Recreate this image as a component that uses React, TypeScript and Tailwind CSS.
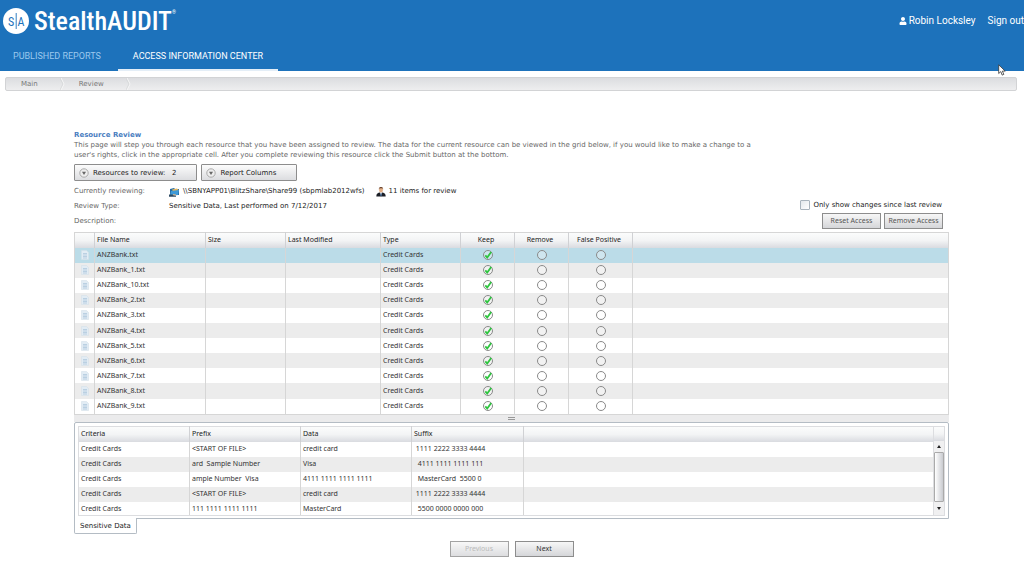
import { useState } from "react";
import { FaUser } from "react-icons/fa";

type Decision = "keep" | "remove" | "falsePositive";

const decisions: { key: Decision; label: string }[] = [
    { key: "keep", label: "Keep" },
    { key: "remove", label: "Remove" },
    { key: "falsePositive", label: "False Positive" },
];

const files = [
    "ANZBank.txt",
    "ANZBank_1.txt",
    "ANZBank_10.txt",
    "ANZBank_2.txt",
    "ANZBank_3.txt",
    "ANZBank_4.txt",
    "ANZBank_5.txt",
    "ANZBank_6.txt",
    "ANZBank_7.txt",
    "ANZBank_8.txt",
    "ANZBank_9.txt",
];

const matches = [
    ["Credit Cards", "<START OF FILE>", "credit card", " 1111 2222 3333 4444"],
    ["Credit Cards", "ard  Sample Number", "Visa", "  4111 1111 1111 111"],
    ["Credit Cards", "ample Number  Visa", "4111 1111 1111 1111", "  MasterCard  5500 0"],
    ["Credit Cards", "<START OF FILE>", "credit card", " 1111 2222 3333 4444"],
    ["Credit Cards", "111 1111 1111 1111", "MasterCard", "  5500 0000 0000 000"],
];

const headerRow = "h-[15px] bg-linear-to-b from-[#fbfcfc] via-[#f3f4f5] to-[#d9dbe0] text-[#222]";
const headerCell = "border-r border-[#d0d1d4] px-[2px] text-left font-normal";
const cell = "border-r border-[#d6d6d6] px-[2px] whitespace-pre";

function Logo() {
    return (
        <a href="#home" className="flex items-center gap-[5px]">
            <svg viewBox="0 0 26 26" className="size-[26px]" aria-hidden="true">
                <circle cx="13" cy="13" r="13" fill="#fff" />
                <path d="M13.200 5v16" stroke="#1d72bb" strokeWidth=".9" />
                <g fill="#1d72bb" fontFamily="Roboto Condensed, Roboto, sans-serif" fontSize="12">
                    <text x="5" y="17.500">S</text>
                    <text x="14.500" y="17.500">A</text>
                </g>
            </svg>
            <span className="flex items-start font-['Roboto_Condensed','Roboto',sans-serif] text-[26px] leading-[28px] font-medium text-white">
                StealthAUDIT
                <sup className="top-0 pt-[3px] text-[5px] leading-[5px]">®</sup>
            </span>
        </a>
    );
}

function DropButton({ children }: { children: React.ReactNode }) {
    return (
        <button
            type="button"
            className="flex h-[17px] items-center gap-1 rounded-[1px] border border-[#8d8d8d] bg-linear-to-b from-[#fcfcfc] to-[#dcdde0] pr-5 pl-1 text-[#222] whitespace-pre"
        >
            <svg viewBox="0 0 10 10" className="size-[10px]" aria-hidden="true">
                <circle cx="5" cy="5" r="4.2" fill="#eee" stroke="#aaa" strokeWidth="1" />
                <path d="M3 3.800h4L5 7z" fill="#666" />
            </svg>
            {children}
        </button>
    );
}

function FileIcon() {
    return (
        <svg viewBox="0 0 8 10" className="mx-auto h-[10px] w-2" aria-hidden="true">
            <path d="M.5.5h5l2 2v7h-7z" fill="#e2ecf4" stroke="#d5e0e9" strokeWidth=".6" />
            <path d="M2 3.500h4M2 5h4M2 6.500h4M2 8h4" stroke="#a9c4da" strokeWidth=".7" />
        </svg>
    );
}

function ShareIcon() {
    return (
        <svg viewBox="0 0 11 10" className="h-[10px] w-[11px]" aria-hidden="true">
            <path d="M1 2l4-1 1 1h4v6H1z" fill="#246ca3" />
            <path d="M3 2.500l5-1 2 2-6 1z" fill="#e3b55f" />
            <path d="M2 4l8-1-1 5-8 1z" fill="#3f9ad8" />
            <path d="M0 7.500h3l2 .8 2 .2v1.300H0z" fill="#2d4a63" />
            <path d="M4 7l3 .5v1l-3-.3z" fill="#d9b48a" />
        </svg>
    );
}

function ReviewerIcon() {
    return (
        <svg viewBox="0 0 10 11" className="h-[11px] w-[10px]" aria-hidden="true">
            <path d="M.3 10.500c0-2.600 1.200-3.700 3-4h3.400c1.800.3 3 1.400 3 4z" fill="#1c1f26" />
            <path d="M3.800 6.300h2.400L5 9.500z" fill="#fff" />
            <path d="M4.700 7h.7l.3 2.500-.7.700-.6-.7z" fill="#3f6ea5" />
            <ellipse cx="5" cy="3.700" rx="2" ry="2.700" fill="#e2ae85" />
            <path d="M2.800 3.500C2.600.2 7.400.2 7.200 3.500L6.500 2.200h-3z" fill="#5a3420" />
        </svg>
    );
}

function Separator() {
    return (
        <svg viewBox="0 0 5 12" className="h-3 w-[5px]" aria-hidden="true">
            <path d="M1 0l3 6-3 6" fill="none" stroke="#f8f8f8" strokeWidth="1" />
            <path d="M0 0l3 6-3 6" fill="none" stroke="#cfd0d2" strokeWidth=".6" />
        </svg>
    );
}

function DecisionRadio({ name, label, checked, onChange }: {
    name: string;
    label: string;
    checked: boolean;
    onChange: () => void;
}) {
    return (
        <span className="mx-auto grid size-[11px] place-items-center">
            <input
                type="radio"
                name={name}
                aria-label={label}
                checked={checked}
                onChange={onChange}
                className="col-start-1 row-start-1 m-0 size-[10px] appearance-none rounded-full border border-[#8a8a8a] bg-white/30"
            />
            {checked && (
                <svg viewBox="0 0 10 10" className="pointer-events-none col-start-1 row-start-1 size-[10px]" aria-hidden="true">
                    <path d="M2.300 5.300l1.900 2.200L8.200 2" fill="none" stroke="#2fc43f" strokeWidth="1.800" />
                </svg>
            )}
        </span>
    );
}

function FilesTable() {
    const [choices, setChoices] = useState<Record<string, Decision>>({});
    const [selected, setSelected] = useState(files[0]);

    return (
        <table className="h-[183px] w-full table-fixed border-collapse border border-[#d6d6d6] font-['Noto_Sans',sans-serif] text-[7px] leading-[10px] text-[#333]">
            <colgroup>
                <col className="w-[20px]" />
                <col className="w-[111px]" />
                <col className="w-[80px]" />
                <col className="w-[95px]" />
                <col className="w-[80px]" />
                <col className="w-[54px]" />
                <col className="w-[54px]" />
                <col className="w-[64px]" />
                <col />
            </colgroup>
            <thead>
                <tr className={headerRow}>
                    <td className={headerCell}></td>
                    <th className={headerCell}>File Name</th>
                    <th className={headerCell}>Size</th>
                    <th className={headerCell}>Last Modified</th>
                    <th className={headerCell}>Type</th>
                    {decisions.map((d) => (
                        <th key={d.key} className="border-r border-[#d0d1d4] pr-[3px] text-center font-normal">{d.label}</th>
                    ))}
                    <td></td>
                </tr>
            </thead>
            <tbody>
                {files.map((file) => (
                    <tr
                        key={file}
                        onClick={() => setSelected(file)}
                        className={file === selected ? "bg-[#bbdce8]" : "odd:bg-white even:bg-[#ececec]"}
                    >
                        <td className="border-r border-[#d6d6d6]"><FileIcon /></td>
                        <td className={cell}>{file}</td>
                        <td className={cell}></td>
                        <td className={cell}></td>
                        <td className={cell}>Credit Cards</td>
                        {decisions.map((d) => (
                            <td key={d.key} className="border-r border-[#d6d6d6]">
                                <DecisionRadio
                                    name={file}
                                    label={`${d.label} ${file}`}
                                    checked={(choices[file] ?? "keep") === d.key}
                                    onChange={() => setChoices({ ...choices, [file]: d.key })}
                                />
                            </td>
                        ))}
                        <td></td>
                    </tr>
                ))}
            </tbody>
        </table>
    );
}

function MatchesPanel() {
    return (
        <div className="flex rounded-t-[2px] border border-[#b4bcc4] bg-white px-[3px] pt-[3px] pb-[2px]">
            <div className="h-[90px] min-w-0 flex-1 overflow-hidden border-b border-[#dcdde0]">
                <table className="h-[92px] w-full table-fixed border-collapse border border-[#dcdde0] font-['Noto_Sans',sans-serif] text-[7px] leading-[10px] text-[#333]">
                    <colgroup>
                        <col className="w-[111px]" />
                        <col className="w-[111px]" />
                        <col className="w-[111px]" />
                        <col className="w-[112px]" />
                        <col />
                    </colgroup>
                    <thead>
                        <tr className={headerRow}>
                            <th className={headerCell}>Criteria</th>
                            <th className={headerCell}>Prefix</th>
                            <th className={headerCell}>Data</th>
                            <th className={headerCell}>Suffix</th>
                            <td></td>
                        </tr>
                    </thead>
                    <tbody>
                        {matches.map((row, i) => (
                            <tr key={i} className="odd:bg-white even:bg-[#ececec]">
                                {row.map((value, j) => (
                                    <td key={j} className={cell}>{value}</td>
                                ))}
                                <td></td>
                            </tr>
                        ))}
                    </tbody>
                </table>
            </div>
            <div className="flex w-[11px] flex-col border border-l-0 border-[#dcdde0] bg-[#f0f0f1]">
                <div className="h-[14px] bg-linear-to-b from-[#fbfcfc] via-[#f3f4f5] to-[#d9dbe0]"></div>
                <button type="button" aria-label="Scroll up" className="flex h-[11px] items-center justify-center">
                    <svg viewBox="0 0 4 3" className="h-[3px] w-1"><path d="M0 3l2-3 2 3z" fill="#222" /></svg>
                </button>
                <div className="flex-1 rounded-[1px] border border-[#aaa] bg-linear-to-r from-white to-[#c9cbd0]"></div>
                <button type="button" aria-label="Scroll down" className="flex h-[13px] items-center justify-center">
                    <svg viewBox="0 0 4 3" className="h-[3px] w-1"><path d="M0 0l2 3 2-3z" fill="#222" /></svg>
                </button>
            </div>
        </div>
    );
}

const smallButton =
    "h-4 w-[59px] border border-[#8d8d8d] bg-linear-to-b from-[#f7f7f7] to-[#d5d6d9] text-center font-['Noto_Sans',sans-serif] text-[7px] leading-[10px]";

export default function App() {
    return (
        <div className="bg-white font-['DejaVu_Sans',sans-serif] text-[7px] leading-[10px] text-[#666]">
            <header className="relative bg-[#1d72bb] font-['Roboto',sans-serif] text-[10px] leading-[14px] text-white">
                <div className="flex h-[42px] items-center justify-between pl-[3px]">
                    <Logo />
                    <div className="flex gap-3">
                        <a href="#profile" className="flex items-center gap-[2px]">
                            <FaUser className="size-2" />
                            Robin Locksley
                        </a>
                        <a href="#signout">Sign out</a>
                    </div>
                </div>
                <nav className="flex h-[29px] items-stretch text-[9px]">
                    <a href="#reports" className="flex items-center border-b-2 border-transparent pr-[17px] pl-[13px] text-[#9cc9ee]">
                        PUBLISHED REPORTS
                    </a>
                    <a href="#access" className="flex items-center border-b-2 border-[#e4eef7] px-[15px]">
                        ACCESS INFORMATION CENTER
                    </a>
                </nav>
                {/* mouse pointer */}
                <svg viewBox="0 0 8 12" className="absolute top-16 right-[18px] h-3 w-2" aria-hidden="true">
                    <path d="M.7.8v8.700l2.100-1.900 1.400 3.500 1.600-.7-1.400-3.300h2.800z" fill="#fff" stroke="#333" strokeWidth=".8" />
                </svg>
            </header>

            <nav className="mt-[6px] mr-[7px] ml-[5px] flex h-[14px] items-center rounded-[2px] border border-[#d2d3d5] bg-linear-to-b from-[#dcdde0] to-[#eeeeef] text-[#777]">
                <a href="#main" className="pr-[22px] pl-[15px]">Main</a>
                <Separator />
                <a href="#review" className="pr-[22px] pl-[14px]">Review</a>
                <Separator />
            </nav>

            <main className="pt-[39px] pr-[75px] pl-[74px]">
                <h1 className="font-bold text-[#4a7ebf]">Resource Review</h1>
                <p className="max-w-[690px]">
                    This page will step you through each resource that you have been assigned to review. The data for the
                    current resource can be viewed in the grid below, if you would like to make a change to a user's rights,
                    click in the appropriate cell. After you complete reviewing this resource click the Submit button at the
                    bottom.
                </p>

                <div className="mt-1 flex gap-1">
                    <DropButton>Resources to review:   2</DropButton>
                    <DropButton>Report Columns</DropButton>
                </div>

                <div className="mt-[3px] flex items-end justify-between">
                    <dl className="grid grid-cols-[95px_auto] leading-[15px]">
                        <dt>Currently reviewing:</dt>
                        <dd className="flex items-center gap-[3px] text-[#222]">
                            <ShareIcon />
                            <span className="mr-2">\\SBNYAPP01\BlitzShare\Share99 (sbpmlab2012wfs)</span>
                            <ReviewerIcon />
                            11 items for review
                        </dd>
                        <dt>Review Type:</dt>
                        <dd className="text-[#222]">Sensitive Data, Last performed on 7/12/2017</dd>
                        <dt>Description:</dt>
                        <dd></dd>
                    </dl>
                    <div className="mr-[6px] flex flex-col items-end gap-[3px]">
                        <label className="mr-px flex items-center gap-[3px] text-[#222]">
                            <input
                                type="checkbox"
                                className="m-0 size-[10px] appearance-none rounded-[1px] border border-[#a9b4bd] bg-linear-to-br from-[#e3e8ec] to-white checked:bg-[#2fc43f]"
                            />
                            Only show changes since last review
                        </label>
                        <div className="flex gap-[3px]">
                            <button type="button" className={`${smallButton} text-[#555]`}>Reset Access</button>
                            <button type="button" className={`${smallButton} text-[#555]`}>Remove Access</button>
                        </div>
                    </div>
                </div>

                <section className="mt-[3px]">
                    <FilesTable />
                    <div className="flex h-[7px] items-center justify-center bg-[#ebebec]">
                        <div className="h-[3px] w-[7px] border-y border-[#999]"></div>
                    </div>
                    <MatchesPanel />
                    <button
                        type="button"
                        className="-mt-px block rounded-b-[2px] border border-t-0 border-[#b4bcc4] bg-white px-[5px] pt-[3px] pb-[2px] text-[#222]"
                    >
                        Sensitive Data
                    </button>
                </section>

                <div className="mt-[7px] flex justify-center gap-[6px]">
                    <button type="button" disabled className={`${smallButton} text-[#aaa] opacity-80`}>Previous</button>
                    <button type="button" className={`${smallButton} text-[#333]`}>Next</button>
                </div>
            </main>
        </div>
    );
}
